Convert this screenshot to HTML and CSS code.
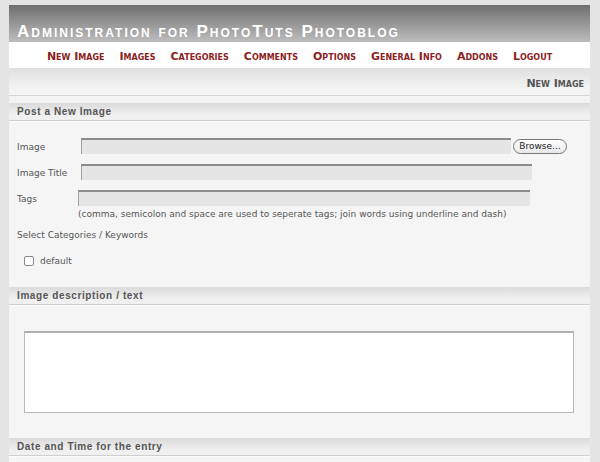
FILE: index.html
```html
<html>
  <head>
    <meta charset="utf-8">
    <title>Administration for PhotoTuts Photoblog</title>
    <link rel="stylesheet" href="styles.css">
  </head>
<body>

<div class="page">
  <div class="header">
    <h1>Administration for PhotoTuts Photoblog</h1>
  </div>

  <div class="nav">
    <a href="#">New Image</a>
    <a href="#">Images</a>
    <a href="#">Categories</a>
    <a href="#">Comments</a>
    <a href="#">Options</a>
    <a href="#">General Info</a>
    <a href="#">Addons</a>
    <a href="#">Logout</a>
  </div>

  <div class="crumb">New Image</div>
  <div class="spacer"></div>

  <div class="section-head">Post a New Image</div>
  <div class="section-body first">
    <div class="row">
      <label class="lbl">Image</label>
      <span class="field image-field"></span>
      <button class="browse">Browse...</button>
    </div>
    <div class="row">
      <label class="lbl">Image Title</label>
      <span class="field title-field"></span>
    </div>
    <div class="row tags">
      <label class="lbl tags-lbl">Tags</label>
      <div>
        <span class="field tags-field"></span>
        <div class="hint">(comma, semicolon and space are used to seperate tags; join words using underline and dash)</div>
      </div>
    </div>
    <div class="cats">Select Categories / Keywords</div>
    <div class="check"><span class="box"></span>default</div>
  </div>

  <div class="section-head">Image description / text</div>
  <div class="section-body second">
    <div class="textarea"></div>
  </div>

  <div class="section-head">Date and Time for the entry</div>
  <div class="section-body third"></div>
</div>

</body></html>
```

FILE: styles.css
```css
body {
  margin: 0;
  background: #e4e4e4;
  font-family: "DejaVu Sans", Verdana, sans-serif;
  font-size: 9px;
  color: #555;
}

.page {
  width: 581px;
  margin: 5px 0 0 9px;
  background: #f5f5f5;
}

.header {
  height: 37px;
  background: linear-gradient(#6f6f6f, #bdbdbd);
  overflow: hidden;
}

.header h1 {
  margin: 0;
  padding: 18px 0 0 8px;
  font-family: "Liberation Sans", Arial, sans-serif;
  font-size: 17px;
  font-variant: small-caps;
  letter-spacing: 2px;
  color: #fff;
  line-height: 18px;
}

.nav {
  height: 26px;
  background: #fff;
  display: flex;
  justify-content: center;
  align-items: center;
  gap: 15px;
}

.nav a {
  color: #8b2222;
  text-decoration: none;
  font-weight: bold;
  font-size: 11px;
  font-variant: small-caps;
  padding-top: 2px;
}

.crumb {
  height: 27px;
  line-height: 31px;
  background: linear-gradient(#e0e0e0, #f4f4f4 80%);
  border-bottom: 1px solid #d4d4d4;
  text-align: right;
  padding-right: 6px;
  font-weight: bold;
  font-size: 11px;
  font-variant: small-caps;
  color: #555;
}

.spacer {
  height: 7px;
  background: #f3f3f3;
}

.section-head {
  height: 17px;
  line-height: 17px;
  padding-left: 8px;
  background: linear-gradient(#dadada, #f0f0f0 70%);
  border-bottom: 1px solid #cfcfcf;
  font-family: "Liberation Sans", Arial, sans-serif;
  font-weight: bold;
  font-size: 10px;
  letter-spacing: 0.6px;
  color: #555;
}

.section-body {
  border-top: 1px solid #fbfbfb;
  padding: 0 8px;
}

.section-body.first {
  padding-top: 16px;
  height: 149px;
}

.row {
  display: flex;
  align-items: center;
  height: 16px;
  margin-bottom: 10px;
}

.lbl {
  width: 64px;
  padding-top: 1px;
}

.tags {
  align-items: flex-start;
  height: auto;
  margin-bottom: 11px;
}

.tags-lbl {
  width: 61px;
  padding-top: 4px;
}

.field {
  display: block;
  height: 14px;
  background: #e5e5e5;
  border-top: 2px solid #8c8c8c;
  border-left: 1px solid #a0a0a0;
}

.image-field {
  width: 429px;
}

.title-field {
  width: 450px;
}

.tags-field {
  width: 451px;
}

.hint {
  margin-top: 3px;
}

.browse {
  margin-left: 2px;
  width: 54px;
  height: 15px;
  padding: 0;
  border: 1px solid #777;
  border-radius: 8px;
  background: linear-gradient(#fff, #e8e8e8);
  font-family: "DejaVu Sans", Verdana, sans-serif;
  font-size: 9px;
  color: #222;
}

.cats {
  height: 12px;
}

.check {
  display: flex;
  align-items: center;
  margin: 14px 0 0 7px;
}

.box {
  width: 8px;
  height: 8px;
  border: 1px solid #888;
  border-radius: 2px;
  background: #fff;
  margin-right: 6px;
}

.section-body.second {
  height: 107px;
  padding-top: 25px;
  padding-left: 15px;
}

.textarea {
  width: 548px;
  height: 79px;
  background: #fff;
  border: 1px solid #b8b8b8;
  border-top: 2px solid #b0b0b0;
}

.section-body.third {
  height: 20px;
}
```
